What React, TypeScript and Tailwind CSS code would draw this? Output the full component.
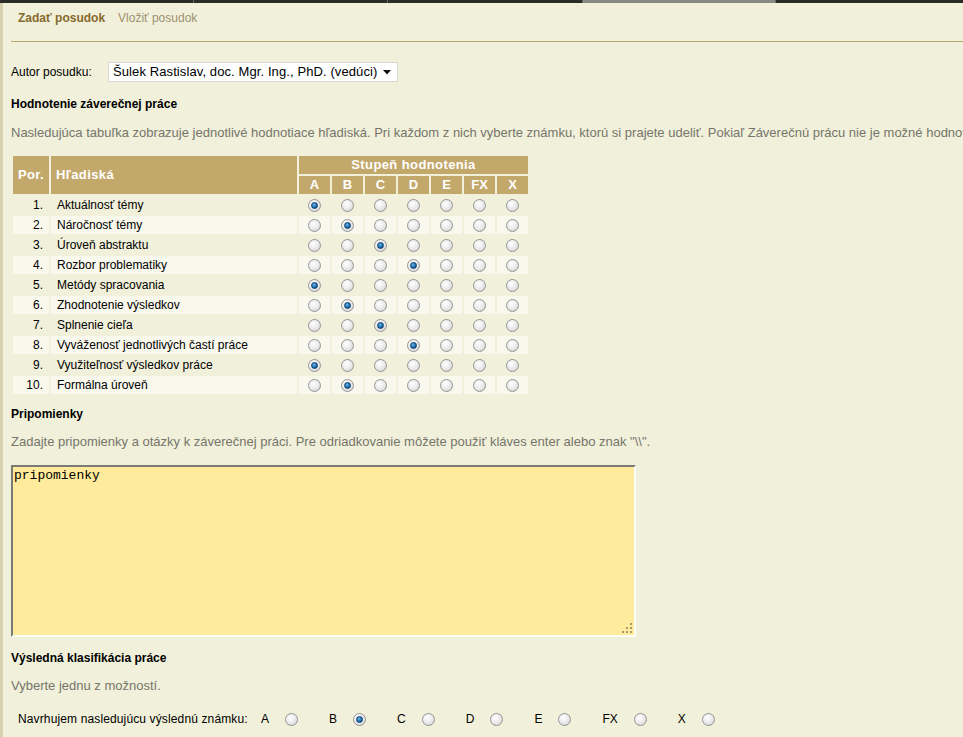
import React from "react";

const criteria = [
  "Aktuálnosť témy",
  "Náročnosť témy",
  "Úroveň abstraktu",
  "Rozbor problematiky",
  "Metódy spracovania",
  "Zhodnotenie výsledkov",
  "Splnenie cieľa",
  "Vyváženosť jednotlivých častí práce",
  "Využiteľnosť výsledkov práce",
  "Formálna úroveň",
];
const selected = [0, 1, 2, 3, 0, 1, 2, 3, 0, 1];
const grades = ["A", "B", "C", "D", "E", "FX", "X"];

function Radio({ checked }: { checked: boolean }) {
  return (
    <span className="relative inline-flex h-[13px] w-[13px] items-center justify-center rounded-full border border-[#959595] bg-[radial-gradient(circle_at_40%_35%,#ffffff_0%,#e8e8e8_55%,#c8c8c8_100%)]">
      {checked && (
        <span className="h-[7px] w-[7px] rounded-full border border-[#0d3f66] bg-[radial-gradient(circle_at_40%_35%,#6fb6ee_0%,#1c6fb0_55%,#0c3f6e_100%)]" />
      )}
    </span>
  );
}

export default function App() {
  return (
    <div className="min-h-[737px] w-full overflow-hidden bg-[#f1f0da] font-['Liberation_Sans',Arial,sans-serif] text-[12px] text-black">
      {/* top bar */}
      <div className="flex h-[3px] bg-[#2c2c27]">
        <div className="w-[193px] bg-[#2c2c27]" />
        <div className="w-px bg-[#6a6a64]" />
        <div className="w-[193px] bg-[#2c2c27]" />
        <div className="w-px bg-[#6a6a64]" />
        <div className="w-[194px] bg-[#2c2c27]" />
        <div className="w-px bg-[#6a6a64]" />
        <div className="w-[192px] bg-[#8a8a85]" />
        <div className="w-px bg-[#6a6a64]" />
        <div className="flex-1 bg-[#2c2c27]" />
      </div>
      <div className="flex">
        <div className="w-[3px] shrink-0 self-stretch bg-[#d9d0b2]" />
        <div className="min-w-0 flex-1 pl-[8px]">
          {/* tabs */}
          <div className="flex h-[30px] items-center gap-[13px] pl-[7px]">
            <span className="font-bold text-[#86692d]">Zadať posudok</span>
            <span className="text-[#9d9170]">Vložiť posudok</span>
          </div>
          <div className="mt-[8px] h-px bg-[#b8a770]" />

          {/* author */}
          <div className="mt-[20px] flex h-[20px] items-center">
            <span className="w-[97px]">Autor posudku:</span>
            <div className="flex h-[20px] w-[290px] items-center justify-between border border-[#d8d8d0] bg-white pl-[4px] pr-[6px] text-[13px]">
              <span className="tracking-[0.1px]">Šulek Rastislav, doc. Mgr. Ing., PhD. (vedúci)</span>
              <svg width="8" height="5" viewBox="0 0 8 5">
                <path d="M0 0 H8 L4 4.5 Z" fill="#111" />
              </svg>
            </div>
          </div>

          <div className="mt-[13px] h-[18px] font-bold leading-[18px]">Hodnotenie záverečnej práce</div>
          <div className="mt-[11px] h-[18px] whitespace-nowrap text-[13px] leading-[18px] text-[#76756c]">
            Nasledujúca tabuľka zobrazuje jednotlivé hodnotiace hľadiská. Pri každom z nich vyberte známku, ktorú si prajete udeliť. Pokiaľ Záverečnú prácu nie je možné hodnotiť podľa niektorého z hľadísk, zvoľte X.
          </div>

          {/* table */}
          <div className="ml-[2px] mt-[14px] grid w-max grid-cols-[36px_246px_repeat(7,31px)] grid-rows-[repeat(12,18px)] gap-[2px]">
            <div className="row-span-2 flex items-center justify-center bg-[#c3a86c] text-[13px] font-bold tracking-[0.4px] text-white">Por.</div>
            <div className="row-span-2 flex items-center bg-[#c3a86c] pl-[5px] text-[13px] font-bold tracking-[0.4px] text-white">Hľadiská</div>
            <div className="col-span-7 flex items-center justify-center bg-[#c3a86c] text-[13px] font-bold tracking-[0.4px] text-white">Stupeň hodnotenia</div>
            {grades.map((g) => (
              <div key={g} className="flex items-center justify-center bg-[#c3a86c] text-[13px] font-bold text-white">
                {g}
              </div>
            ))}
            {criteria.map((c, i) => {
              const bg = i % 2 === 1 ? "bg-[#f8f8ed]" : "";
              return (
                <React.Fragment key={c}>
                  <div className={`flex items-center justify-end pr-[6px] ${bg}`}>{i + 1}.</div>
                  <div className={`flex items-center pl-[6px] ${bg}`}>{c}</div>
                  {grades.map((g, j) => (
                    <div key={g} className={`flex items-center justify-center ${bg}`}>
                      <Radio checked={selected[i] === j} />
                    </div>
                  ))}
                </React.Fragment>
              );
            })}
          </div>

          <div className="mt-[11px] h-[18px] font-bold leading-[18px]">Pripomienky</div>
          <div className="mt-[10px] h-[18px] whitespace-nowrap text-[13px] leading-[18px] text-[#76756c]">
            Zadajte pripomienky a otázky k záverečnej práci. Pre odriadkovanie môžete použiť kláves enter alebo znak "\\".
          </div>

          {/* textarea */}
          <div className="relative mt-[14px] h-[172px] w-[625px] border-2 border-[#7a7a76] border-b-[#fdfdf8] border-r-[#fdfdf8] bg-[#ffeb9b] px-[1px] pt-[1px] font-['Liberation_Mono','Courier_New',monospace] text-[13px] leading-[16px]">
            pripomienky
            <svg className="absolute bottom-[1px] right-[1px]" width="12" height="12" viewBox="0 0 12 12">
              <rect x="9" y="1" width="2" height="2" fill="#a39a6e" />
              <rect x="5" y="5" width="2" height="2" fill="#a39a6e" />
              <rect x="9" y="5" width="2" height="2" fill="#a39a6e" />
              <rect x="1" y="9" width="2" height="2" fill="#a39a6e" />
              <rect x="5" y="9" width="2" height="2" fill="#a39a6e" />
              <rect x="9" y="9" width="2" height="2" fill="#a39a6e" />
            </svg>
          </div>

          <div className="mt-[12px] h-[18px] font-bold leading-[18px]">Výsledná klasifikácia práce</div>
          <div className="mt-[10px] h-[18px] text-[13px] leading-[18px] text-[#76756c]">Vyberte jednu z možností.</div>

          <div className="mt-[15px] flex h-[18px] items-center pl-[7px]">
            <span className="mr-[13px] w-[230px] whitespace-nowrap tracking-[0.13px]">Navrhujem nasledujúcu výslednú známku:</span>
            {grades.map((g) => (
              <span key={g} className="mr-[31px] flex items-center">
                <span className="mr-[16px]">{g}</span>
                <Radio checked={g === "B"} />
              </span>
            ))}
          </div>
          <div className="h-[18px]" />
        </div>
      </div>
    </div>
  );
}
